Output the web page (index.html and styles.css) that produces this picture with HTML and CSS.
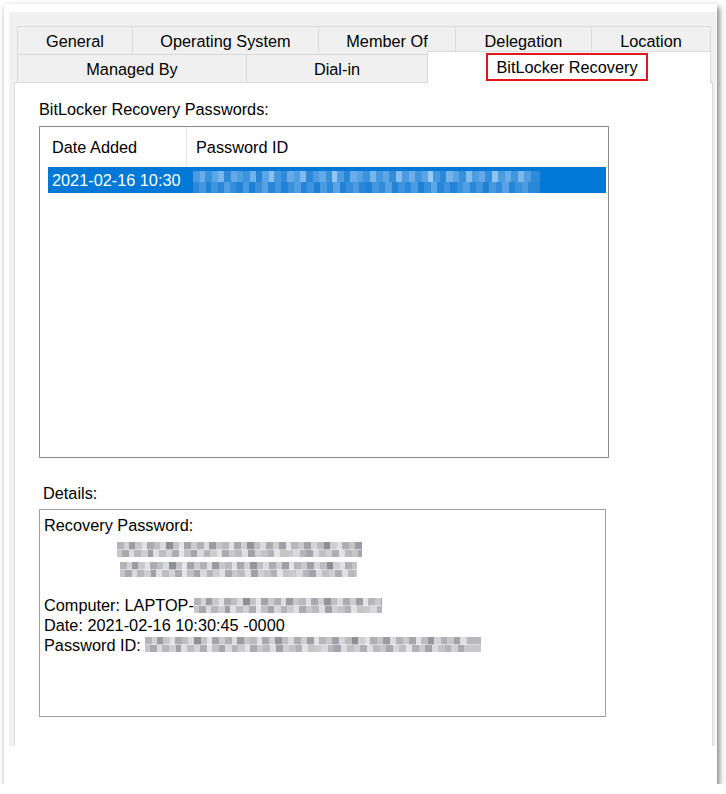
FILE: index.html
```html
<!DOCTYPE html>
<html>
<head>
<meta charset="utf-8">
<link rel="stylesheet" href="styles.css">
</head>
<body>
<div class="window">
  <div class="dialog">
    <div class="tabs">
      <div class="tab-row">
        <div class="tab w115">General</div>
        <div class="tab w186">Operating System</div>
        <div class="tab w137">Member Of</div>
        <div class="tab w136">Delegation</div>
        <div class="tab w120 last">Location</div>
      </div>
      <div class="tab-row row2">
        <div class="tab w229">Managed By</div>
        <div class="tab w181">Dial-in</div>
        <div class="tab w284 last selected"><span class="highlight">BitLocker Recovery</span></div>
      </div>
    </div>
    <div class="panel">
      <div class="label">BitLocker Recovery Passwords:</div>
      <div class="listbox">
        <div class="list-header">
          <div class="col col-date">Date Added</div>
          <div class="col col-id">Password ID</div>
        </div>
        <div class="list-row selected-row">
          <span class="cell-date">2021-02-16 10:30</span>
          <span class="blur blur-blue"></span>
        </div>
      </div>
      <div class="label details-label">Details:</div>
      <div class="details">
        <div class="line">Recovery Password:</div>
        <div class="line"><span class="blur blur-gray b1"></span></div>
        <div class="line"><span class="blur blur-gray b2"></span></div>
        <div class="line">&nbsp;</div>
        <div class="line">Computer: LAPTOP-<span class="blur blur-gray b3"></span></div>
        <div class="line">Date: 2021-02-16 10:30:45 -0000</div>
        <div class="line">Password ID: <span class="blur blur-gray b4"></span></div>
      </div>
    </div>
  </div>
</div>
</body>
</html>
```
FILE: styles.css
```css
* { box-sizing: border-box; }
html, body { margin: 0; padding: 0; background: #fff; }
body {
  font-family: "Liberation Sans", Arial, sans-serif;
  font-size: 16.3px;
  color: #000;
}
.window {
  margin: 4px 0 0 4px;
  width: 713px;
  height: 780px;
  background: #fff;
  padding: 8px 1px 38px 5px;
  box-shadow: 2px 3px 6px rgba(0,0,0,0.55);
}
.dialog {
  background: #f0f0f0;
  height: 734px;
  padding: 14px 3px 0 5px;
  display: flex;
  flex-direction: column;
}
.tabs {
  margin: 0 2px 0 3px;
  position: relative;
  z-index: 2;
}
.tab-row {
  display: flex;
  height: 28px;
}
.tab {
  height: 28px;
  border-top: 1px solid #d9d9d9;
  border-left: 1px solid #d9d9d9;
  background: #f0f0f0;
  display: flex;
  align-items: center;
  justify-content: center;
  line-height: 18px;
}
.tab.last { border-right: 1px solid #d9d9d9; }
.w115 { width: 115px; }
.w186 { width: 186px; }
.w137 { width: 137px; }
.w136 { width: 136px; }
.w120 { width: 120px; }
.w229 { width: 229px; }
.w181 { width: 181px; }
.w284 { width: 284px; }
.tab.selected {
  background: #fff;
  margin-top: -3px;
  height: 32px;
  padding-top: 0;
  padding-bottom: 1px;
  padding-right: 4px;
}
.highlight {
  border: 2px solid #e8141c;
  padding: 0 8px;
  height: 28px;
  line-height: 24px;
}
.panel {
  flex: 1;
  background: #fff;
  border-top: 1px solid #d9d9d9;
  border-left: 1px solid #d9d9d9;
  border-right: 1px solid #d9d9d9;
  padding: 17px 0 0 24px;
}
.label {
  line-height: 18px;
  height: 18px;
}
.listbox {
  margin-top: 8px;
  width: 570px;
  height: 332px;
  border: 1px solid #858a92;
}
.list-header {
  display: flex;
  height: 40px;
  align-items: stretch;
}
.col {
  display: flex;
  align-items: center;
}
.col-date {
  width: 147px;
  padding-left: 12px;
  border-right: 1px solid #e5e5e5;
}
.col-id { padding-left: 9px; }
.list-row {
  margin-left: 8px;
  width: 558px;
  height: 26px;
  display: flex;
  align-items: center;
}
.selected-row {
  background: #0078d7;
  color: #fff;
}
.cell-date {
  padding-left: 4px;
  width: 145px;
}
.blur { display: inline-block; }
.blur-blue {
  width: 347px;
  height: 22px;
  margin-top: 4px;
  background:
    linear-gradient(90deg, #4a9be1 0 7px, #6aaee9 7px 12px, #3a91dd 12px 19px, #5ba6e6 19px 25px, #7ab6ec 25px 31px, #2f8ad9 31px 38px, #64aae8 38px 44px, #4f9fe3 44px 50px, #3d93de 50px 57px, #70b2eb 57px 63px, #2585d6 63px 69px, #5aa5e6 69px 76px, #8cc0ef 76px 81px, #4297df 81px 88px, #3089d9 88px 94px, #66abe8 94px 101px, #509fe3 101px 107px, #7fb9ed 107px 113px, #2d88d8 113px 120px, #4b9ce2 120px 126px, #63a9e8 126px 133px, #3991dc 133px 139px, #95c6f1 139px 144px, #4d9de2 144px 151px, #2a86d7 151px 157px, #6badea 157px 164px, #56a2e4 164px 170px, #3b92dd 170px 177px, #79b6ec 177px 183px, #4498e0 183px 190px, #5ea7e6 190px 196px, #328cda 196px 203px, #86bdee 203px 209px, #4a9be1 209px 216px, #6eafea 216px 222px, #3e94de 222px 229px, #5ba5e5 229px 235px, #9acaf2 235px 240px, #4599e0 240px 247px, #2b87d8 247px 253px, #74b4eb 253px 260px, #5aa4e5 260px 266px, #3790db 266px 273px, #82bbee 273px 279px, #4d9de2 279px 286px, #65aae8 286px 292px, #358edb 292px 299px, #8fc2f0 299px 305px, #4b9ce1 305px 312px, #6badea 312px 318px, #3f95de 318px 325px, #7ab7ec 325px 331px, #519fe3 331px 338px, #2f8ad9 338px 347px) top / 100% 50% no-repeat,
    linear-gradient(90deg, #2c88d8 0 6px, #4396df 6px 13px, #1f82d5 13px 18px, #3e94de 18px 25px, #2a87d8 25px 31px, #519fe2 31px 37px, #3590dc 37px 43px, #2483d6 43px 50px, #4a9be1 50px 56px, #1e80d4 56px 62px, #3991dc 62px 69px, #56a2e4 69px 75px, #2886d7 75px 82px, #4196df 82px 88px, #2181d5 88px 95px, #3a92dd 95px 101px, #4f9fe2 101px 108px, #2684d7 108px 114px, #3d93de 114px 121px, #1c7fd4 121px 127px, #4799e0 127px 134px, #2e89d9 134px 140px, #5aa4e5 140px 147px, #2282d6 147px 153px, #3890dc 153px 160px, #4b9ce1 160px 166px, #2a87d8 166px 173px, #1f81d5 173px 179px, #4397df 179px 186px, #318bda 186px 192px, #54a1e3 192px 199px, #2584d6 199px 205px, #3e94de 205px 212px, #2c88d8 212px 218px, #4a9be1 218px 225px, #1e80d4 225px 231px, #3790db 231px 238px, #5da6e6 238px 244px, #2886d7 244px 251px, #4094df 251px 257px, #2383d6 257px 264px, #3a92dd 264px 270px, #509fe3 270px 277px, #2987d8 277px 283px, #3f95de 283px 290px, #1d80d4 290px 296px, #4698e0 296px 303px, #318bda 303px 309px, #59a3e5 309px 316px, #2484d6 316px 322px, #3c93dd 322px 329px, #4b9ce1 329px 335px, #2a87d8 335px 347px) bottom / 100% 50% no-repeat;
}
.details-label {
  margin-top: 26px;
  padding-left: 4px;
}
.details {
  margin-top: 7px;
  width: 567px;
  height: 208px;
  border: 1px solid #a0a0a0;
  padding: 5px 0 0 4px;
}
.line {
  line-height: 20px;
  height: 20px;
  white-space: nowrap;
}
.blur-gray {
  height: 15px;
  background:
    linear-gradient(90deg, #b4b4b8 0 7px, #d2d2d4 7px 12px, #9c9ca2 12px 18px, #c8c8cc 18px 25px, #e2e2e4 25px 30px, #aaaab0 30px 37px, #bfbfc3 37px 43px, #d9d9db 43px 49px, #8f9096 49px 56px, #c3c3c7 56px 62px, #e5e5e7 62px 67px, #a4a4aa 67px 74px, #cbcbce 74px 80px, #b0b0b5 80px 87px, #dcdcde 87px 92px, #9a9aa0 92px 99px, #c6c6c9 99px 105px, #b9b9bd 105px 112px, #e0e0e2 112px 117px, #a8a8ad 117px 124px, #d0d0d3 124px 130px, #94949a 130px 137px, #c0c0c4 137px 143px, #dadadc 143px 149px, #acacb1 149px 156px, #cececf 156px 162px, #9e9ea4 162px 169px, #e3e3e5 169px 174px, #b6b6ba 174px 181px, #c9c9cc 181px 187px, #a0a0a6 187px 194px, #d6d6d8 194px 200px, #bcbcc0 200px 207px, #8e8f95 207px 213px, #cfcfd2 213px 220px, #e1e1e3 220px 225px, #aeaeb3 225px 232px, #c4c4c7 232px 238px, #9b9ba1 238px 245px, #dbdbdd 245px 251px, #b3b3b7 251px 258px, #cacacd 258px 264px, #a6a6ab 264px 271px, #e4e4e6 271px 276px, #bdbdc1 276px 283px, #979799 283px 289px, #d3d3d5 289px 296px, #b1b1b6 296px 302px, #c7c7ca 302px 309px, #a2a2a8 309px 315px, #dedee0 315px 322px, #b7b7bb 322px 336px) top / 100% 50% no-repeat,
    linear-gradient(90deg, #c6c6ca 0 5px, #a8a8ae 5px 12px, #dcdcde 12px 17px, #b8b8bc 17px 24px, #cfcfd2 24px 31px, #9fa0a6 31px 36px, #e0e0e2 36px 42px, #bebec2 42px 49px, #d4d4d6 49px 55px, #acacb1 55px 62px, #e6e6e8 62px 67px, #c2c2c6 67px 74px, #a5a5aa 74px 80px, #d8d8da 80px 87px, #b5b5b9 87px 93px, #cdcdd0 93px 100px, #e2e2e4 100px 105px, #a9a9ae 105px 112px, #c9c9cc 112px 118px, #bbbbbf 118px 125px, #dfdfe1 125px 131px, #a1a1a7 131px 138px, #d1d1d3 138px 144px, #c4c4c7 144px 151px, #b2b2b6 151px 157px, #e4e4e6 157px 163px, #abababb0 163px 170px, #cacacd 170px 176px, #d9d9db 176px 183px, #b6b6ba 183px 189px, #a3a3a9 189px 196px, #dcdcde 196px 202px, #c0c0c4 202px 209px, #cfcfd1 209px 215px, #aeaeb3 215px 222px, #e1e1e3 222px 228px, #bababe 228px 235px, #c7c7ca 235px 241px, #a7a7ac 241px 248px, #d6d6d8 248px 254px, #bfbfc3 254px 261px, #e3e3e5 261px 267px, #b0b0b5 267px 274px, #cbcbce 274px 280px, #a4a4a9 280px 287px, #dadadc 287px 293px, #c3c3c6 293px 300px, #b4b4b8 300px 306px, #d2d2d4 306px 313px, #a9a9ae 313px 319px, #c8c8cb 319px 336px) bottom / 100% 50% no-repeat;
}
.b1 { width: 245px; margin-left: 73px; vertical-align: -6px; }
.b2 { width: 237px; margin-left: 76px; vertical-align: -6px; }
.b3 { width: 188px; vertical-align: -2px; }
.b4 { width: 336px; vertical-align: -1px; }
```
